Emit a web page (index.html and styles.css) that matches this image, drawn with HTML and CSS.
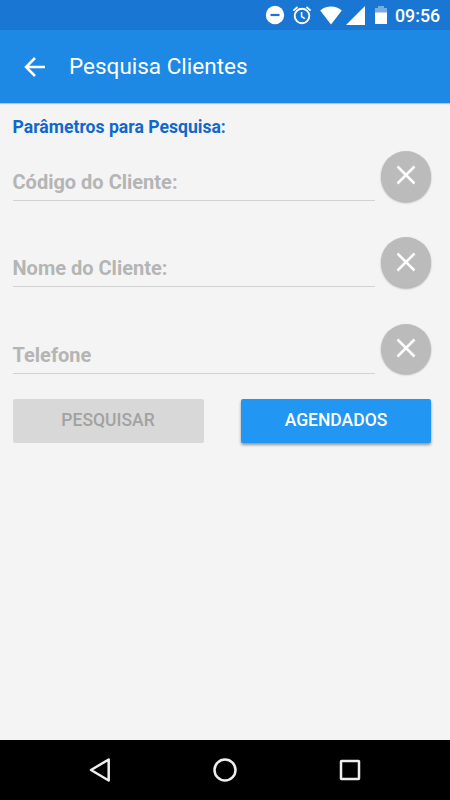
FILE: index.html
```html
<!DOCTYPE html>
<html lang="pt-br">
<head>
    <meta charset="UTF-8">
    <meta name="viewport" content="width=device-width, initial-scale=1.0">
    <title>Pesquisa Clientes</title>
    <link rel="stylesheet" href="styles.css">
</head>
<body>
    <div class="status-bar">
        <svg class="icon-dnd" width="20" height="20" viewBox="0 0 20 20"><circle cx="10" cy="10" r="9.2" fill="#fff"/><path d="M5.5 10h9" stroke="#1976d2" stroke-width="2.2"/></svg>
        <svg class="icon-alarm" width="20" height="20" viewBox="0 0 20 20" fill="none" stroke="#fff" stroke-width="1.9"><circle cx="10" cy="11" r="7.3"/><path d="M1.4 5.6L5.6 2M18.6 5.6L14.4 2"/><path d="M9.6 7v4.6l3.3 2" stroke-width="1.5"/></svg>
        <svg class="icon-wifi" width="22" height="19" viewBox="0 0 22 19"><path d="M11 18.6L.2 4.4Q4.8.4 11 .4T21.8 4.4z" fill="#fff"/></svg>
        <svg class="icon-signal" width="20" height="19" viewBox="0 0 20 19"><path d="M19 0v19H0z" fill="#fff"/></svg>
        <svg class="icon-battery" width="12" height="18" viewBox="0 0 12 18"><path d="M0 2h3V0h6v2h3v5H0z" fill="#76ade4"/><path d="M0 6.5h12V18H0z" fill="#fff"/></svg>
        <span class="clock">09:56</span>
    </div>

    <div class="toolbar">
        <svg class="back" width="22" height="20" viewBox="0 0 22 20" fill="none" stroke="#fff" stroke-width="2.5"><path d="M21 10H3M11 1L2 10l9 9"/></svg>
        <h1>Pesquisa Clientes</h1>
    </div>

    <div id="main-content">
        <h2>Parâmetros para Pesquisa:</h2>

        <div class="field">
            <label>Código do Cliente:</label>
            <button class="clear-button"><svg width="20" height="20" viewBox="0 0 20 20"><path d="M1.5 1.5l17 17M18.5 1.5l-17 17"/></svg></button>
        </div>
        <div class="field">
            <label>Nome do Cliente:</label>
            <button class="clear-button"><svg width="20" height="20" viewBox="0 0 20 20"><path d="M1.5 1.5l17 17M18.5 1.5l-17 17"/></svg></button>
        </div>
        <div class="field">
            <label>Telefone</label>
            <button class="clear-button"><svg width="20" height="20" viewBox="0 0 20 20"><path d="M1.5 1.5l17 17M18.5 1.5l-17 17"/></svg></button>
        </div>

        <div class="buttons">
            <button class="btn btn-disabled" disabled>PESQUISAR</button>
            <button class="btn btn-primary">AGENDADOS</button>
        </div>
    </div>

    <div class="nav-bar">
        <svg width="24" height="26" viewBox="0 0 24 26"><path d="M20.7 2.5v21L3 13z"/></svg>
        <svg width="26" height="26" viewBox="0 0 26 26"><circle cx="13" cy="13" r="10.5"/></svg>
        <svg width="24" height="26" viewBox="0 0 24 26"><rect x="3" y="4" width="18" height="18" rx="0.5"/></svg>
    </div>
</body>
</html>
```

FILE: styles.css
```css
* {
    box-sizing: border-box;
}

body {
    font-family: Roboto, "Liberation Sans", sans-serif;
    margin: 0;
    height: 100vh;
    display: flex;
    flex-direction: column;
    background-color: #f4f4f4;
    overflow: hidden;
}

svg {
    display: block;
    flex-shrink: 0;
}

.status-bar {
    height: 30px;
    flex-shrink: 0;
    display: flex;
    align-items: center;
    justify-content: flex-end;
    padding-right: 10px;
    background-color: #1976d2;
    color: #fff;
}

.icon-alarm {
    margin-left: 7px;
}

.icon-wifi {
    margin-left: 8px;
}

.icon-signal {
    margin-left: 4px;
}

.icon-battery {
    margin-left: 9px;
}

.clock {
    width: 45px;
    margin-left: 8px;
    padding-top: 1px;
    font-size: 17.8px;
    font-weight: 500;
    line-height: 30px;
    white-space: nowrap;
}

.toolbar {
    height: 73px;
    flex-shrink: 0;
    display: flex;
    align-items: center;
    padding-left: 24px;
    background-color: #1e88e5;
    box-shadow: 0 1px 1px rgba(0, 0, 0, 0.2);
}

.back {
    margin-top: 1px;
}

h1 {
    margin: 0 0 2px 23px;
    font-size: 22.5px;
    font-weight: 400;
    line-height: 30px;
    color: #fff;
}

#main-content {
    flex: 1;
    padding: 12px 19px 0 12.5px;
}

h2 {
    margin: 0;
    font-size: 17.6px;
    font-weight: 700;
    line-height: 24px;
    color: #1068cc;
}

.field {
    display: flex;
    justify-content: space-between;
    height: 51px;
    margin-top: 12.2px;
    margin-bottom: 35.3px;
}

.field + .field {
    margin-top: 0;
}

.field label {
    width: 362.5px;
    height: 50px;
    padding-top: 18px;
    font-size: 20px;
    font-weight: 700;
    line-height: 26px;
    color: #b5b5b5;
    border-bottom: 1px solid #d2d2d2;
}

.clear-button {
    width: 50.5px;
    height: 50.5px;
    padding: 0 0 2px;
    display: flex;
    align-items: center;
    justify-content: center;
    border: none;
    border-radius: 50%;
    background-color: #bbb;
    box-shadow: 0 1px 2px rgba(0, 0, 0, 0.3);
}

.clear-button svg {
    margin-left: 1px;
}

.clear-button path {
    stroke: #fff;
    stroke-width: 2.5;
}

.buttons {
    display: flex;
    justify-content: space-between;
    margin-top: -11.2px;
}

.btn {
    width: 191px;
    height: 44.5px;
    padding: 0 0 2px;
    border: none;
    border-radius: 2px;
    font-family: inherit;
    font-size: 17.5px;
    font-weight: 500;
}

.btn-disabled {
    background-color: #d8d8d8;
    color: #a2a2a2;
}

.btn-primary {
    width: 190px;
    background-color: #2196f3;
    color: #fff;
    box-shadow: 0 2px 3px rgba(0, 0, 0, 0.4);
}

.nav-bar {
    height: 60px;
    flex-shrink: 0;
    display: flex;
    align-items: center;
    justify-content: space-between;
    padding: 0 88px;
    background-color: #000;
}

.nav-bar svg {
    fill: none;
    stroke: #eee;
    stroke-width: 2.5;
    stroke-linejoin: round;
}
```
